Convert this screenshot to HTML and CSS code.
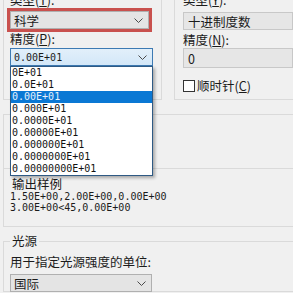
FILE: index.html
```html
<!DOCTYPE html>
<html lang="zh-CN">
<head>
  <meta charset="UTF-8">
  <title>图形单位</title>
  <link rel="stylesheet" href="styles.css">
</head>
<body>
  <div class="page">

    <div class="top">
      <div class="group group-left">
        <div class="label">类型(<u>T</u>):</div>
        <div class="combo marked">
          <span>科学</span>
          <svg class="chevron" width="9" height="5" viewBox="0 0 9 5"><polyline points="0.5,0.5 4.5,4.5 8.5,0.5"/></svg>
        </div>
        <div class="label spaced">精度(<u>P</u>):</div>
        <div class="combo open">
          <span class="num">0.00E+01</span>
          <svg class="chevron" width="9" height="5" viewBox="0 0 9 5"><polyline points="0.5,0.5 4.5,4.5 8.5,0.5"/></svg>
          <ul class="dropdown">
            <li>0E+01</li>
            <li>0.0E+01</li>
            <li class="selected">0.00E+01</li>
            <li>0.000E+01</li>
            <li>0.0000E+01</li>
            <li>0.00000E+01</li>
            <li>0.000000E+01</li>
            <li>0.0000000E+01</li>
            <li>0.00000000E+01</li>
          </ul>
        </div>
      </div>

      <div class="group group-right">
        <div class="label">类型(<u>Y</u>):</div>
        <div class="combo disabled">
          <span>十进制度数</span>
        </div>
        <div class="label spaced">精度(<u>N</u>):</div>
        <div class="field disabled">
          <span>0</span>
        </div>
        <label class="check">
          <span class="box"></span>
          <span>顺时针(<u>C</u>)</span>
        </label>
      </div>
    </div>

    <div class="group scale-group"></div>

    <div class="group sample-group">
      <div class="label sample-title">输出样例</div>
      <div class="num sample first">1.50E+00,2.00E+00,0.00E+00</div>
      <div class="num sample">3.00E+00&lt;45,0.00E+00</div>
    </div>

    <div class="group light-group">
      <div class="legend">光源</div>
      <div class="label">用于指定光源强度的单位:</div>
      <div class="combo">
        <span>国际</span>
        <svg class="chevron" width="9" height="5" viewBox="0 0 9 5"><polyline points="0.5,0.5 4.5,4.5 8.5,0.5"/></svg>
      </div>
    </div>

  </div>
</body>
</html>
```

FILE: styles.css
```css
:root {
  --bg: #f0f0f0;
  --line: #dadada;
  --text: #1b1b1b;
  --combo-bg: #e4e4e4;
  --combo-border: #b0b0b0;
  --accent: #0a78d4;
  --mark: #c9514e;
}

* {
  box-sizing: border-box;
}

body {
  margin: 0;
  width: 293px;
  height: 293px;
  overflow: hidden;
  background: var(--bg);
  color: var(--text);
  font-family: "Noto Sans CJK SC", "Liberation Sans", sans-serif;
  font-size: 12.5px;
}

u {
  text-decoration-thickness: 1px;
  text-underline-offset: 1px;
}

.page {
  margin-top: -7px;
}

.label {
  height: 14px;
  line-height: 14px;
  white-space: nowrap;
}

.label.spaced {
  margin-top: 3px;
}

.num {
  font-family: "DejaVu Sans Mono", "Liberation Mono", monospace;
  font-size: 10px;
}

/* group boxes */

.top {
  display: flex;
  height: 107px;
}

.group {
  border: 1px solid var(--line);
  border-right: none;
}

.group-left {
  width: 159px;
  margin-left: 3px;
  border-top: none;
  border-right: 1px solid var(--line);
  padding-left: 6px;
}

.group-right {
  flex: 1;
  margin-left: 12px;
  border-top: none;
  padding-left: 8px;
}

/* combos */

.combo {
  position: relative;
  display: flex;
  align-items: center;
  justify-content: space-between;
  height: 18px;
  padding: 0 5px 0 3px;
  background: var(--combo-bg);
  border: 1px solid var(--combo-border);
  white-space: nowrap;
}

.chevron {
  fill: none;
  stroke: #4a4a4a;
  stroke-width: 1;
}

.group-left .combo {
  margin-top: 4px;
  width: 139px;
}

.combo.marked {
  outline: 3px solid var(--mark);
  outline-offset: 0;
}

.combo.open {
  margin-top: 2px;
  width: 143px;
  background: linear-gradient(#e2effa, #d3e7f8);
  border-color: #3d7ab3;
}

.combo.disabled,
.field.disabled {
  background: #e6e6e6;
  border: 1px solid #c8c8c8;
  padding-left: 4px;
}

.group-right .combo {
  margin-top: 5px;
}

.field {
  display: flex;
  align-items: center;
  height: 20px;
  margin-top: 1px;
  padding-left: 5px;
}

.check {
  display: flex;
  align-items: center;
  gap: 2px;
  margin-top: 11px;
  height: 13px;
}

.check .box {
  width: 12px;
  height: 12px;
  background: #fff;
  border: 1px solid #333;
}

/* dropdown list */

.dropdown {
  position: absolute;
  z-index: 2;
  top: 17px;
  left: -1px;
  width: 143px;
  margin: 0;
  padding: 0;
  list-style: none;
  background: #fff;
  border: 1px solid #2f5a84;
  box-shadow: 2px 2px 3px rgba(0, 0, 0, 0.3);
  font-family: "DejaVu Sans Mono", "Liberation Mono", monospace;
  font-size: 10px;
}

.dropdown li {
  height: 12px;
  line-height: 12px;
  padding-left: 1px;
  color: #111;
}

.dropdown li.selected {
  background: var(--accent);
  color: #e6f1fc;
}

/* lower groups */

.scale-group {
  height: 54px;
  margin: 14px 0 0 3px;
  border-bottom: none;
}

.sample-group {
  height: 59px;
  margin-left: 3px;
  padding: 8px 0 0 6px;
}

.sample-title {
  height: 13px;
  line-height: 13px;
  margin-left: 2px;
}

.sample {
  height: 11px;
  line-height: 11px;
}

.sample.first {
  margin-top: 1px;
}

.light-group {
  height: 51px;
  margin: 14px 0 0 3px;
  padding-left: 6px;
}

.legend {
  display: inline-block;
  height: 14px;
  line-height: 14px;
  margin-top: -8px;
  padding: 0 2px;
  vertical-align: top;
  background: var(--bg);
}

.light-group .label {
  margin-top: -6px;
}

.light-group .combo {
  margin-top: 5px;
  width: 142px;
}
```
